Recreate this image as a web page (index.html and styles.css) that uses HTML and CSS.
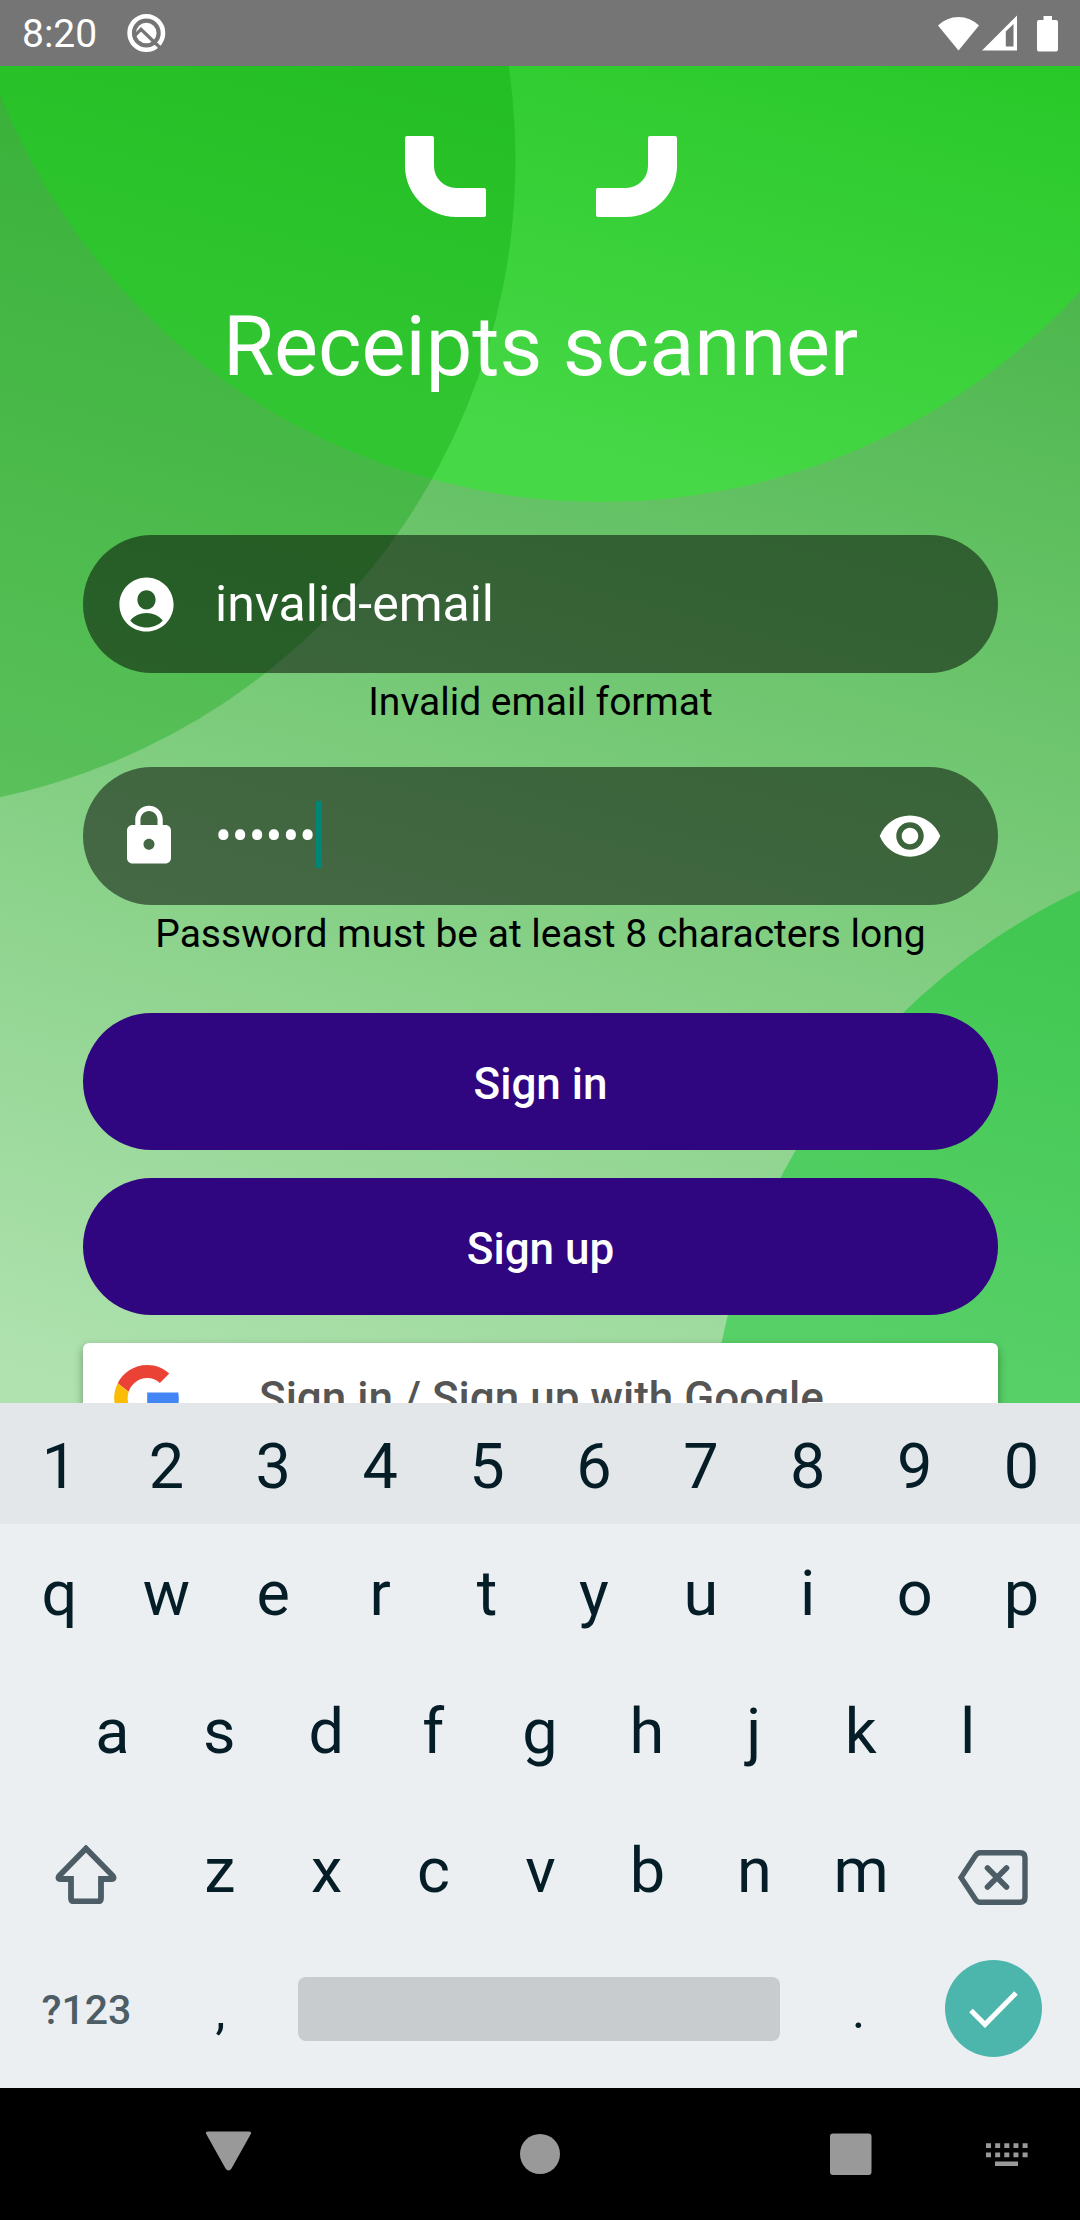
FILE: index.html
```html
<!DOCTYPE html>
<html lang="en">
<head>
<meta charset="utf-8">
<title>Receipts scanner</title>
<link rel="stylesheet" href="styles.css">
</head>
<body>
<div class="screen">
  <header class="status">
    <span class="clock">8:20</span>
    <svg class="q-icon" width="40" height="42" viewBox="0 0 40 42">
      <circle cx="20.300" cy="21" r="16.700" fill="none" stroke="#fff" stroke-width="4.600"/>
      <circle cx="20.300" cy="21" r="10.300" fill="#fff"/>
      <path d="M7.500 25L15 17.300L37 38.500" fill="none" stroke="#757575" stroke-width="3.200"/>
    </svg>
    <div class="status-right">
      <svg width="41" height="36" viewBox="0 0 41 36"><path d="M0 10.500A29 29 0 0 1 41 10.500L20.500 35.500z" fill="#fff"/></svg>
      <svg class="signal" width="35" height="36" viewBox="0 0 35 36"><path fill-rule="evenodd" d="M0 35.500L35 .5V35.500zM23.800 16.500V31.500H31.500V9z" fill="#fff"/></svg>
      <svg class="battery" width="21" height="37" viewBox="0 0 21 37"><path d="M6.500 1h8.500v4h4q2 0 2 2v27.500q0 2-2 2H2q-2 0-2-2V7q0-2 2-2h4.500z" fill="#fff"/></svg>
    </div>
  </header>

  <main class="app">
    <svg class="backdrop" width="1080" height="1337" viewBox="0 66 1080 1337">
      <defs>
        <linearGradient id="base" gradientUnits="userSpaceOnUse" x1="56" y1="-209" x2="-344" y2="1283">
          <stop offset="0" stop-color="rgb(60,176,60)"/><stop offset="1" stop-color="rgb(176,226,176)"/>
        </linearGradient>
        <linearGradient id="top" gradientUnits="userSpaceOnUse" x1="56" y1="-209" x2="-76" y2="285">
          <stop offset="0" stop-color="rgb(40,200,40)"/><stop offset="1" stop-color="rgb(71,216,71)"/>
        </linearGradient>
        <linearGradient id="low" gradientUnits="userSpaceOnUse" x1="-168" y1="626" x2="-280" y2="1046">
          <stop offset="0" stop-color="rgb(66,200,82)"/><stop offset="1" stop-color="rgb(88,208,104)"/>
        </linearGradient>
      </defs>
      <rect y="66" width="1080" height="1337" fill="url(#base)"/>
      <circle cx="602" cy="-146" r="648" fill="url(#top)"/>
      <circle cx="-136" cy="160" r="651.500" fill="rgb(8,165,8)" fill-opacity=".34"/>
      <circle cx="1354" cy="1476" r="646.500" fill="url(#low)"/>
    </svg>
    <svg class="logo" width="272" height="81" viewBox="0 0 272 81">
      <path id="corner" d="M2 0h25a2 2 0 0 1 2 2v28a22 22 0 0 0 22 22h28a2 2 0 0 1 2 2v25a2 2 0 0 1-2 2H51A51 51 0 0 1 0 30V2a2 2 0 0 1 2-2z" fill="#fff"/>
      <use href="#corner" transform="translate(272 0) scale(-1 1)"/>
    </svg>
    <h1 class="title">Receipts scanner</h1>

    <div class="field">
      <svg class="icon-account" width="65" height="65" viewBox="0 0 24 24" fill="#fff"><path d="M12 2C6.480 2 2 6.480 2 12s4.480 10 10 10 10-4.480 10-10S17.520 2 12 2zm0 4.700c1.860 0 3.350 1.500 3.350 3.500S13.860 13.800 12 13.800s-3.350-1.600-3.350-3.600S10.140 6.700 12 6.700zm0 13.800c-2.280 0-4.500-.9-6-2.500 1.200-1.800 3.600-2.900 6-2.900s4.800 1.100 6 2.900c-1.500 1.600-3.720 2.500-6 2.500z"/></svg>
      <span class="value">invalid-email</span>
    </div>
    <p class="error">Invalid email format</p>

    <div class="field">
      <svg class="icon-lock" width="66" height="66" viewBox="0 0 24 24" fill="#fff"><path d="M18 8h-1V6c0-2.760-2.240-5-5-5S7 3.240 7 6v2H6c-1.100 0-2 .9-2 2v10c0 1.100.9 2 2 2h12c1.100 0 2-.9 2-2V10c0-1.100-.9-2-2-2zm-6 9c-1.100 0-2-.9-2-2s.9-2 2-2 2 .9 2 2-.9 2-2 2zm3.100-9H8.900V6c0-1.710 1.390-3.100 3.100-3.100s3.100 1.390 3.100 3.100v2z"/></svg>
      <span class="value">••••••</span><span class="caret"></span>
      <svg class="icon-eye" width="66" height="66" viewBox="0 0 24 24" fill="#fff"><path d="M12 4.500C7 4.500 2.730 7.610 1 12c1.730 4.390 6 7.500 11 7.500s9.270-3.110 11-7.500c-1.730-4.390-6-7.500-11-7.500zM12 17c-2.760 0-5-2.240-5-5s2.240-5 5-5 5 2.240 5 5-2.240 5-5 5zm0-8c-1.660 0-3 1.340-3 3s1.340 3 3 3 3-1.340 3-3-1.340-3-3-3z"/></svg>
    </div>
    <p class="error error-last">Password must be at least 8 characters long</p>

    <div class="actions">
      <div class="pill">Sign in</div>
      <div class="pill">Sign up</div>
      <div class="google">
        <svg width="65" height="66" viewBox="0 0 47 48"><path fill="#EA4335" d="M24 9.500c3.540 0 6.710 1.220 9.210 3.600l6.850-6.850C35.900 2.380 30.470 0 24 0 14.620 0 6.510 5.380 2.560 13.220l7.980 6.190C12.430 13.720 17.740 9.500 24 9.500z"/><path fill="#4285F4" d="M46.980 24.550c0-1.570-.15-3.090-.38-4.550H24v9.020h12.940c-.58 2.960-2.260 5.480-4.780 7.180l7.730 6c4.510-4.180 7.090-10.360 7.090-17.650z"/><path fill="#FBBC05" d="M10.530 28.590c-.48-1.450-.76-2.990-.76-4.590s.27-3.140.76-4.590l-7.980-6.190C.92 16.460 0 20.120 0 24c0 3.880.92 7.540 2.560 10.780l7.970-6.190z"/><path fill="#34A853" d="M24 48c6.480 0 11.930-2.130 15.890-5.810l-7.730-6c-2.150 1.450-4.920 2.300-8.160 2.300-6.260 0-11.570-4.220-13.470-9.910l-7.980 6.190C6.510 42.620 14.620 48 24 48z"/></svg>
        <span>Sign in / Sign up with Google</span>
      </div>
    </div>
  </main>

  <section class="keyboard">
    <div class="row digits"><span>1</span><span>2</span><span>3</span><span>4</span><span>5</span><span>6</span><span>7</span><span>8</span><span>9</span><span>0</span></div>
    <div class="row"><span>q</span><span>w</span><span>e</span><span>r</span><span>t</span><span>y</span><span>u</span><span>i</span><span>o</span><span>p</span></div>
    <div class="row nine"><span>a</span><span>s</span><span>d</span><span>f</span><span>g</span><span>h</span><span>j</span><span>k</span><span>l</span></div>
    <div class="row wide">
      <span class="glyph"><svg width="62" height="59" viewBox="0 0 62 59"><path d="M31 3.500L57.500 30.500Q60 34 56.500 34H46V53Q46 56.500 42.500 56.500H19.500Q16 56.500 16 53V34H5.500Q2 34 4.500 30.500z" fill="none" stroke="#4c5d66" stroke-width="5.800"/></svg></span>
      <span>z</span><span>x</span><span>c</span><span>v</span><span>b</span><span>n</span><span>m</span>
      <span class="glyph back"><svg width="70" height="55" viewBox="0 0 70 55" fill="none" stroke="#4c5d66" stroke-width="5.400"><path d="M22 2.700H62Q67 2.700 67 7.700V47.300Q67 52.300 62 52.300H22Q19.500 52.300 17.500 49.500L3 27.500L17.500 5.500Q19.500 2.700 22 2.700z"/><path d="M29.500 18L48.500 37M48.500 18L29.500 37" stroke-linecap="round" stroke-width="5.600"/></svg></span>
    </div>
    <div class="row bottom">
      <span class="symbols">?123</span><span class="punct">,</span><span class="space"></span><span class="punct">.</span>
      <span class="enter"><svg width="49" height="38" viewBox="0 0 49 38"><path d="M2 20.500L16 34.500L47 3" fill="none" stroke="#fff" stroke-width="5"/></svg></span>
    </div>
  </section>

  <nav class="navbar">
    <svg width="1080" height="132" viewBox="0 2088 1080 132" fill="#999">
      <path d="M208.500 2131.500H248.500Q252.500 2131.500 250.500 2134.500L231.500 2168.500Q228.500 2172.500 225.500 2168.500L206.500 2134.500Q204.500 2131.500 208.500 2131.500z"/>
      <circle cx="540" cy="2154" r="20"/>
      <rect x="830" y="2133.500" width="41.500" height="41.500" rx="3"/>
      <path d="M986 2145.700h42M986 2154.900h42" stroke="#999" stroke-width="4.800" stroke-dasharray="5 4.150"/>
      <rect x="995" y="2161.500" width="23" height="4.500"/>
    </svg>
  </nav>
</div>
</body>
</html>
```
FILE: styles.css
```css
* { box-sizing: border-box; }
body { margin: 0; font-family: Roboto, "Liberation Sans", sans-serif; }
svg { display: block; flex: none; }

.screen { width: 1080px; height: 2220px; display: flex; flex-direction: column; overflow: hidden; background: #000; }

.status { height: 66px; background: #757575; color: #fff; display: flex; align-items: center; padding: 0 22px; }
.clock { font-size: 39px; line-height: 66px; padding-top: 2px; width: 104px; }
.status-right { margin-left: auto; display: flex; align-items: center; }
.signal { margin-left: 3px; }
.battery { margin-left: 20px; }

.app { position: relative; height: 1337px; overflow: hidden; display: flex; flex-direction: column; padding: 70px 82px 0 83px; }
.backdrop { position: absolute; top: 0; left: 0; }
.app > :not(.backdrop) { position: relative; flex: none; }
.logo { align-self: center; }
.title { margin: 80px 0 140px; font-size: 83px; line-height: 98px; padding-top: 1px; height: 98px; font-weight: 400; text-align: center; color: #fff; }

.field { height: 138px; border-radius: 69px; background: rgba(0, 0, 0, .5); display: flex; align-items: center; color: #fff; font-size: 50px; line-height: 60px; }
.icon-account { margin: 0 36px 0 31px; }
.icon-lock { margin: 0 33px 0 33px; }
.icon-eye { margin: 0 55px 0 auto; }
.caret { width: 6px; height: 67px; background: #008577; margin: 0 0 4px 0; }
.error { margin: 0; height: 94px; padding-top: 6px; font-size: 39px; line-height: 46px; text-align: center; color: #000; }
.error-last { height: 108px; }

.actions { display: flex; flex-direction: column; gap: 28px; }
.pill { height: 137px; border-radius: 68.5px; background: #300680; color: #fff; font-size: 44px; font-weight: 500; line-height: 137px; padding-top: 3px; text-align: center; }
.google { height: 110px; border-radius: 6px; background: #fff; box-shadow: 0 4px 10px rgba(0, 0, 0, .35); display: flex; align-items: center; padding-left: 31px; }
.google span { flex: 1; padding-left: 80px; font-size: 44px; font-weight: 500; color: #555; }

.keyboard { height: 685px; background: #ebeff2; color: #041d27; font-size: 63px; }
.row { height: 138.5px; display: grid; grid-template-columns: repeat(10, 1fr); padding: 0 5px 0 6px; text-align: center; line-height: 139px; }
.digits { height: 121px; line-height: 127px; background: #e3e7ea; }
.nine { grid-template-columns: repeat(9, 1fr); padding: 0 59px; line-height: 137px; }
.wide { grid-template-columns: 1.5fr repeat(7, 1fr) 1.5fr; }
.glyph { display: flex; align-items: center; justify-content: center; padding-top: 7px; }
.back { padding: 13px 3px 0 0; }
.bottom { display: flex; align-items: center; }
.symbols { width: 161px; font-size: 41px; font-weight: 500; color: #4c5d66; padding-top: 3px; }
.punct { width: 107px; font-size: 50px; padding-top: 5px; }
.space { width: 482px; height: 64px; border-radius: 8px; background: #c8ccce; margin: 0 25px 0 24px; }
.enter { width: 97px; height: 97px; border-radius: 50%; background: #4db6ac; margin-left: 33px; display: flex; align-items: center; justify-content: center; }
.navbar { height: 132px; background: #000; }
```
